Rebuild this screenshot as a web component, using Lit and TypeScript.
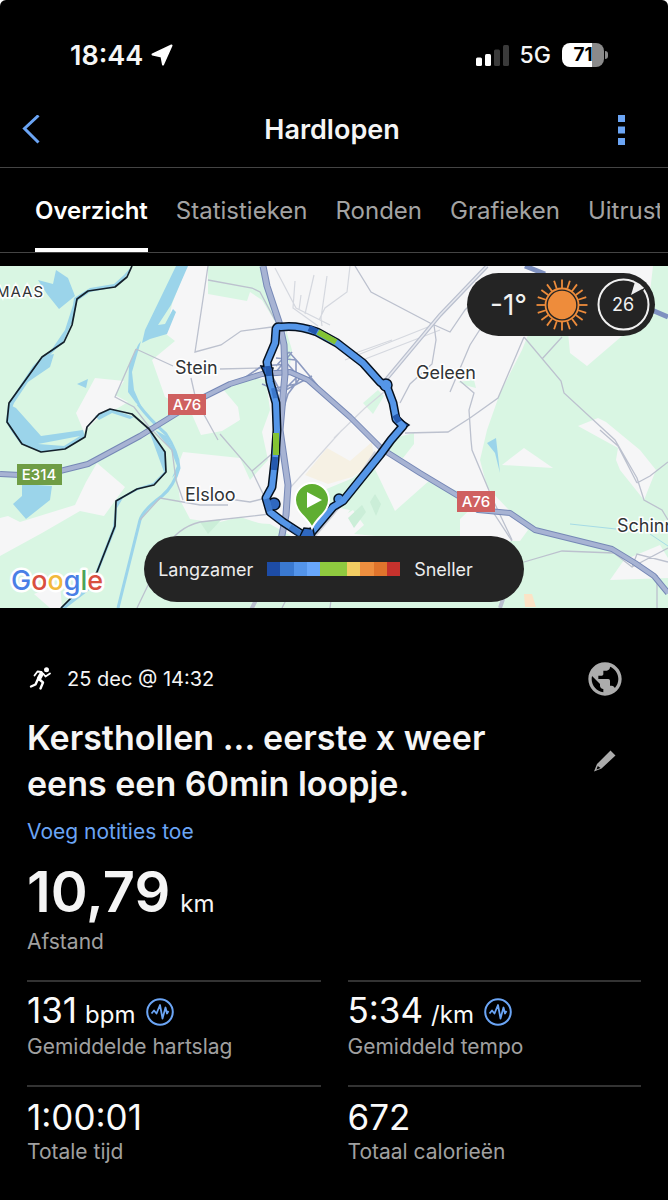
import { LitElement, html, svg, css } from "lit";
import { customElement, property, state } from "lit/decorators.js";

const PACE_COLORS = [
  "#1d4ca6", "#3a79d0", "#5394ea", "#68a7fb", "#8fca3f",
  "#8fca3f", "#f2cd62", "#ee8f3f", "#e0742c", "#c6322d",
];

@customElement("activity-map")
class ActivityMap extends LitElement {
  static styles = css`
    :host { display: block; position: relative; overflow: hidden; background: #d9f6e3; }
    .canvas { display: block; width: 100%; height: auto; }
    .canvas text { font-family: Inter, "Liberation Sans", sans-serif; }
    .green { fill: #d9f6e3; }
    .land { fill: #f6f6f7; }
    .sand { fill: #f6f1e4; }
    .water { fill: #9bd4ea; }
    .stream { fill: none; stroke: #9bd4ea; stroke-width: 3; }
    .minor { fill: none; stroke: #bcc1ce; stroke-width: 1.3; }
    .rail { fill: none; stroke: #d5d8df; stroke-width: 1.2; }
    .road-edge { fill: none; stroke: #7688b6; stroke-linejoin: round; }
    .road { fill: none; stroke: #a7b3d3; stroke-linejoin: round; }
    .ramp { fill: none; stroke: #8c9ac0; stroke-width: 1.6; stroke-linejoin: round; }
    .border { fill: none; stroke: #14202a; stroke-width: 1.7; stroke-linejoin: round; }
    .track-edge { fill: none; stroke: #06111f; stroke-width: 9; stroke-linejoin: round; }
    .track { fill: none; stroke: #5596e8; stroke-width: 6; stroke-linejoin: round; }
    .slow { stroke: #2459ae; }
    .fast { stroke: #83c334; }
    .town { font-size: 18px; fill: #303336; stroke: #fff; stroke-width: 3; paint-order: stroke; }
    .region { font-size: 15px; letter-spacing: 1px; fill: #303336; stroke: #fff; stroke-width: 3; paint-order: stroke; }
    .shield { font-size: 15px; font-weight: 500; fill: #fff; text-anchor: middle; }
    .brand { font-size: 27px; font-weight: 500; stroke: #fff; stroke-width: 5; stroke-linejoin: round; paint-order: stroke; }
    .b { fill: #4a7fe6; } .r { fill: #d9503f; } .y { fill: #f2b93b; } .g { fill: #4ba45a; }
    .weather {
      position: absolute; top: 7px; right: 13px; display: flex; align-items: center;
      height: 63px; padding: 0 5px 0 23px; border-radius: 32px; background: #242424; color: #f1f1f1;
    }
    .temp { font-size: 28px; width: 46px; }
    .sun { display: block; width: 52px; height: 52px; }
    .wind { display: block; width: 53px; height: 53px; margin-left: 9px; }
    .wind text { font-family: Inter, sans-serif; font-size: 18px; fill: #f1f1f1; text-anchor: middle; }
    .legend-row { position: absolute; left: 0; right: 0; bottom: 6px; display: flex; justify-content: center; }
    .legend {
      display: flex; align-items: center; justify-content: center; gap: 14px; box-sizing: border-box;
      width: 380px; height: 66px; padding-right: 37px; border-radius: 33px; background: #242424;
      color: #ededed; font-size: 18px;
    }
    .scale { display: flex; width: 133px; height: 14px; }
    .step { flex: 1; }
  `;

  private rays() {
    return Array.from({ length: 20 }, (_, i) => {
      const a = (i * Math.PI) / 10;
      const x = Math.cos(a), y = Math.sin(a);
      return svg`<line x1=${26 + 17 * x} y1=${26 + 17 * y} x2=${26 + 25.5 * x} y2=${26 + 25.5 * y}></line>`;
    });
  }

  private highway(d: string, width: number) {
    return svg`
      <path class="road-edge" stroke-width=${width} d=${d}></path>
      <path class="road" stroke-width=${width - 2} d=${d}></path>`;
  }

  private terrain() {
    return svg`
      <rect class="green" x="0" y="266" width="668" height="342"></rect>
      <path class="land" d="M187 266L172 304L166 334L175 341L152 360L165 397L190 410L201 435L222 431L240 420L262 432L268 460L250 480L240 458L183 452L176 470L180 500L190 519L216 523L240 517L268 526L300 541L440 541L470 541L520 541L528 530L487 487L480 460L487 430L500 393L522 350L530 330L568 332L570 353L587 366L622 336L648 310L653 266Z"></path>
      <path class="green" d="M208 266L262 266L272 300L277 325L262 300L250 292L247 301L208 294Z"></path>
      <path class="green" d="M222 388L246 376L266 380L270 410L262 432L246 438L240 452L220 452L214 440L240 420L238 407Z"></path>
      <path class="green" d="M220 436L244 432L246 446L232 456L220 455Z"></path>
      <path class="green" d="M286 330L292 350L290 365L284 350Z"></path>
      <path class="green" d="M363 403L378 390L384 396L373 414Z"></path>
      <path class="green" d="M394 438L414 433L414 444L403 458L388 452Z"></path>
      <path class="green" d="M300 500L353 478L372 463L395 511L430 480L460 492L480 500L460 519L460 541L330 541L350 510Z"></path>
      <path class="sand" d="M305 475L327 448L350 461L372 442L374 462L352 477L328 484Z"></path>
      <path class="green" d="M240 522L270 524L300 541L235 541Z"></path>
      <path class="land" d="M340 518L353 510L364 525L354 534L430 541L322 541Z"></path>
      <path class="land" d="M95 378L124 381L115 395L128 402L118 408L98 418L84 432L76 413Z"></path>
      <path class="land" d="M97 463L125 487L104 516L80 511L42 533L0 556V518L8 516L20 522L75 505L86 482Z"></path>
      <path class="land" d="M34 594L60 584L62 608L50 608Z"></path>
      <path class="land" d="M502 465L524 448L553 468Z"></path>
      <path class="land" d="M578 426L598 418L606 422L640 450L656 470L644 500L620 470L616 460L618 448Z"></path>
      <path class="land" d="M610 580L624 560L660 545L668 558V578Z"></path>
      <path class="land" d="M483 266L490 266L510 275L500 275Z"></path>
      <path class="green" d="M458 382L474 380L476 388L468 386Z"></path>
      <path d="M524 594L532 594L536 607L525 607Z" fill="#fbe3c6"></path>
      <path fill="#cbeed8" d="M348 518L362 505L366 512L354 528ZM370 502L375 494L381 504L376 516Z"></path>
      <path fill="#cbeed8" d="M200 522L222 519L208 534Z"></path>`;
  }

  private waters() {
    return svg`
      <path class="water" d="M176 266L188 266L171 305L158 325L165 324L173 309L176 312L167 334L150 339L142 343L145 330Z"></path>
      <path class="water" d="M141 341L132 372L134 390L142 408L136 403L128 392L129 365L138 345Z"></path>
      <path class="stream" d="M138 404Q150 420 166 434Q178 452 179 468Q174 486 162 496Q143 510 140 520L118 608"></path>
      <path class="water" d="M155 430L166 436L177 456L179 470L172 478L177 466L171 450Z"></path>
      <path class="water" d="M38 280L53 284L56 270L68 278L75 296L59 309L47 294Z"></path>
      <path class="water" d="M132 266L126 276L116 287L90 292L77 301L74 318L63 342L48 357L42 359L50 352L65 330L73 305L74 298L90 288L114 284L124 275Z"></path>
      <path class="water" d="M54 354L50 367L28 382L14 403L9 415L8 404L33 366L43 356Z"></path>
      <path class="water" d="M8 404L16 408L41 436L83 430L85 437L66 449L42 452L20 443L12 432L6 422Z"></path>
      <path fill="#d9f6e3" d="M38 444L80 436L64 446Z"></path>
      <path class="water" d="M77 384L88 379L86 388Z"></path>
      <path class="water" d="M95 416L111 409L134 417L130 419L112 413L99 420Z"></path>
      <path class="water" d="M148 428L157 440L166 452V472L155 484L138 490L123 498L117 508L116 528L98 573L96 571L113 527L116 500L137 488L153 483L164 472Z"></path>
      <path class="water" d="M22 484L52 486L50 500L26 519L13 504L22 496Z"></path>
      <path class="water" d="M98 572L96 585L66 608L60 608L80 590Z"></path>
      <path class="water" d="M487 443L496 438L500 473L495 453Z"></path>
      <path fill="none" stroke="#a6dbe6" stroke-width="1" d="M570 524L616 529M650 534L668 546"></path>`;
  }

  private roads() {
    return svg`
      <path class="rail" d="M275 268L296 308L330 325M295 281L293 308L318 326M301 295L299 310M314 275L305 314M327 276L321 318L322 326M350 266L347 292L325 308L319 320M345 360L428 327M350 355L392 340M360 361L440 330M334 438L365 408L384 392M290 488L342 430"></path>
      <path class="minor" d="M208 266L195 352L221 345L241 331L272 327M208 280L252 288L260 292L275 320M136 349L173 366M136 349L115 397L134 407L150 428L172 450L176 480L183 500M191 378L196 400L218 440M220 369L266 368M355 266L371 292L430 323L450 332L465 310L480 295M434 325L436 340L432 364L410 384L400 403M450 392L470 345L486 320L495 305M460 381L474 393L469 410L471 440L472 450L493 500L512 540M524 337L498 398L470 418L448 432L405 433M524 337L561 381L564 393L615 440L637 478L644 500L662 510L668 520M562 337L542 359M637 483L650 476L668 462M600 430L618 446L637 483M220 434L252 471L266 500M252 471L274 452M222 498L250 502L266 498M140 520L160 498L200 505L228 505M137 608L165 550Q176 528 200 522L270 514M524 562L562 551L614 553L632 567L637 554L668 562M632 567L668 548M657 575V608M333 584L330 608M290 592L282 608"></path>
      <path class="minor" stroke-width="2.4" d="M512 541L493 512"></path>
      <path fill="none" stroke="#bac0cf" stroke-width="4" d="M487 266L440 315L384 382M250 612L260 592M500 608L506 590"></path>
      <path fill="none" stroke="#e7e9ef" stroke-width="1.5" d="M487 266L440 315L384 382"></path>
      <path fill="none" stroke="#cdd0da" stroke-width="4" d="M376 452L344 500L314 536"></path>
      <path class="ramp" d="M240 381L262 366L288 364M262 384L282 392L312 376M276 358L296 360L296 384L276 388M289 352L298 362L318 386M289 352L276 366M284 360L300 378L288 394L280 420M272 376L284 398L282 420M292 352L276 372M284 390L300 374"></path>
      ${this.highway("M0 474L20 475L60 471L88 464L140 436L200 399L230 384L262 374L290 372L308 380L350 417L382 449L420 473L465 500L478 510L510 513L535 530L612 549L635 563L654 576L668 593", 6)}
      ${this.highway("M263 266L267 286L279 322L284 345L285 374L280 430L288 485L286 515L281 540", 7)}
      <path fill="none" stroke="#7f91c0" stroke-width="5" d="M525 266L545 274M640 305L668 317"></path>
      <path class="border" d="M132 266L127 277L115 287L88 291L77 299L72 325L64 342L42 357L9 403L7 422L22 444L41 452L65 449L85 437L87 427L99 414L110 409L132 414L149 429L165 452L166 472L154 485L137 489L116 501L115 526L97 572L61 608"></path>`;
  }

  private track() {
    const loop = "M303 535L283 522L270 512L266 498L272 487L275 460L277 430L276 403L270 382L267 362L275 343L276 329Q277 326 281 327Q298 325 317 332L337 343L363 363L380 382L387 387L393 403L396 419L403 426L391 440L380 455L343 501L333 507L311 533Z";
    return svg`
      <path class="track-edge" d=${loop}></path>
      <path d="M261 366L273 368L271 375L265 375ZM397 417L409 425L399 432Z" fill="#2459ae" stroke="#06111f" stroke-width="1.5"></path>
      <circle cx="386" cy="385" r="6" fill="#5596e8" stroke="#06111f" stroke-width="1.5"></circle>
      <circle cx="339" cy="499" r="5" fill="#4c8de0" stroke="#06111f" stroke-width="1.5"></circle>
      <circle cx="274" cy="504" r="6" fill="#2f68c0" stroke="#06111f" stroke-width="1.5"></circle>
      <path class="track" d=${loop}></path>
      <path class="track slow" d="M309 328L317 332M274 470L275 457M268 366L269 376M395 415L399 422"></path>
      <path class="track" stroke-opacity="0.5" style="stroke:#2459ae" d="M274 388L276 398M290 527L300 534M266 499L270 511"></path>
      <path class="track fast" d="M318 332L336 342M276 455L276 433"></path>
      <path d="M299 538L304 528L313 529L315 538Z" fill="#2f68c0" stroke="#06111f" stroke-width="1.5"></path>
      <path fill="#5fae31" stroke="#fff" stroke-width="2" d="M312 528C307 517 295 512 295 500A17 17 0 0 1 329 500C329 512 317 517 312 528Z"></path>
      <path fill="#fff" d="M307 492L322 500L307 508Z"></path>`;
  }

  render() {
    return html`
      <svg class="canvas" viewBox="0 266 668 342" role="img" aria-label="Kaart van de route">
        ${this.terrain()} ${this.waters()} ${this.roads()}
        <rect x="168" y="394" width="38" height="21" fill="#cf6060"></rect>
        <text class="shield" x="187" y="410">A76</text>
        <rect x="457" y="491" width="38" height="21" fill="#cf6060"></rect>
        <text class="shield" x="476" y="507">A76</text>
        <rect x="17" y="464" width="45" height="21" fill="#6f9d45"></rect>
        <text class="shield" x="39" y="480">E314</text>
        <text class="region" x="-4" y="297">MAAS</text>
        <text class="town" x="175" y="374">Stein</text>
        <text class="town" x="416" y="379">Geleen</text>
        <text class="town" x="185" y="501">Elsloo</text>
        <text class="town" x="617" y="532">Schinnen</text>
        ${this.track()}
        <text class="brand" x="11" y="590"><tspan class="b">G</tspan><tspan class="r">o</tspan><tspan class="y">o</tspan><tspan class="b">g</tspan><tspan class="g">l</tspan><tspan class="r">e</tspan></text>
      </svg>
      <div class="weather">
        <span class="temp">-1°</span>
        <svg class="sun" viewBox="0 0 52 52" aria-label="Zonnig">
          <g stroke="#ee8c3b" stroke-width="1.8">${this.rays()}</g>
          <circle cx="26" cy="26" r="16.5" fill="#242424" stroke="#ee8c3b" stroke-width="1.8"></circle>
          <circle cx="26" cy="26" r="14.2" fill="#ee8c3b"></circle>
        </svg>
        <svg class="wind" viewBox="0 0 53 53">
          <circle cx="26.500" cy="26.500" r="25" fill="none" stroke="#f1f1f1" stroke-width="2"></circle>
          <path fill="#242424" d="M38 0L50 7L46 13L35 6Z"></path>
          <path fill="#f1f1f1" d="M38 4L34 17L47 10Z"></path>
          <path fill="none" stroke="#f1f1f1" stroke-width="2" d="M36 3.400A25 25 0 0 1 46 10.500"></path>
          <text x="26" y="33">26</text>
        </svg>
      </div>
      <div class="legend-row">
        <div class="legend">
          <span>Langzamer</span>
          <span class="scale">
            ${PACE_COLORS.map((c) => html`<span class="step" style="background:${c}"></span>`)}
          </span>
          <span>Sneller</span>
        </div>
      </div>`;
  }
}

@customElement("stat-cell")
class StatCell extends LitElement {
  @property() value = "";
  @property() unit = "";
  @property() label = "";
  @property({ type: Boolean }) chart = false;

  static styles = css`
    :host { display: block; box-sizing: border-box; height: 105px; border-top: 2px solid #333; padding-top: 8px; }
    .line { display: flex; align-items: center; height: 44px; }
    .value { display: flex; align-items: baseline; gap: 8px; font-size: 35px; line-height: 44px; color: #fafafa; }
    .unit { font-size: 24px; }
    .label { font-size: 21px; line-height: 26px; color: #a0a0a0; }
    .chart { display: block; margin: 0 0 0 10px; padding: 0; border: 0; background: none; }
    .pulse { display: block; width: 28px; height: 28px; }
  `;

  render() {
    return html`
      <div class="line">
        <span class="value"><span>${this.value}</span>${this.unit ? html`<span class="unit">${this.unit}</span>` : ""}</span>
        ${this.chart
          ? html`<button class="chart" aria-label="Grafiek tonen">
              <svg class="pulse" viewBox="0 0 28 28" fill="none" stroke="#6ba5f5" stroke-width="2">
                <circle cx="14" cy="14" r="12.800"></circle>
                <path stroke-width="1.800" stroke-linejoin="round" d="M5.500 15.500L8 12.500L10.500 15.500L14 7L16.500 20.500L19.500 9.500L21 15.500L22.500 13"></path>
              </svg>
            </button>`
          : ""}
      </div>
      <div class="label">${this.label}</div>`;
  }
}

@customElement("app-root")
class AppRoot extends LitElement {
  @state() private active = "Overzicht";

  static styles = css`
    :host {
      display: block; min-height: 100vh; border-radius: 6px 6px 0 0; overflow: hidden;
      background: #000; color: #f5f5f5; font-family: Inter, "Liberation Sans", sans-serif;
    }
    button { font: inherit; color: inherit; border: 0; padding: 0; background: none; cursor: pointer; }
    svg { display: block; }
    .status {
      display: flex; align-items: center; justify-content: space-between;
      height: 92px; padding: 18px 60px 0 70px; box-sizing: border-box;
    }
    .clock { display: flex; align-items: center; gap: 8px; font-size: 27px; font-weight: 600; }
    .arrow { width: 22px; height: 22px; }
    .signals { display: flex; align-items: center; font-size: 23px; font-weight: 500; }
    .bars { width: 33px; height: 21px; margin-right: 11px; }
    .battery { display: flex; align-items: center; gap: 1px; margin-left: 11px; }
    .level {
      width: 42px; height: 24px; border-radius: 8px; color: #000; text-align: center;
      font-size: 19px; line-height: 24px; font-weight: 700;
      background: linear-gradient(90deg, #fff 71%, #8a8a8a 71%);
    }
    .cap { width: 3px; height: 8px; border-radius: 0 4px 4px 0; background: #8a8a8a; }
    .bar {
      display: grid; grid-template-columns: 40px 1fr 40px; align-items: center;
      height: 76px; padding: 0 26px 0 22px; box-sizing: border-box; border-bottom: 1px solid #444;
    }
    .back-icon { width: 20px; height: 30px; }
    .title { margin: 0; text-align: center; font-size: 27px; line-height: 32px; font-weight: 600; }
    .more { justify-self: end; padding-right: 16px; }
    .more-icon { width: 8px; height: 30px; }
    .tabs { display: flex; border-bottom: 1px solid #444; height: 84px; }
    .scroller { display: flex; gap: 28px; flex: 1; min-width: 0; overflow: hidden; margin-right: 8px; padding-left: 35px; }
    .tab {
      flex: none; padding-top: 5px; font-size: 24px; color: #a3a3a3; border-bottom: 4px solid transparent; white-space: nowrap;
    }
    .tab.on { color: #fff; font-weight: 600; border-bottom-color: #fff; }
    .map { margin-top: 13px; }
    .summary { display: grid; grid-template-columns: 1fr 34px; padding: 51px 46px 0 27px; }
    .when { display: flex; align-items: center; gap: 14px; height: 40px; font-size: 20px; }
    .runner { width: 26px; height: 26px; }
    .side { display: flex; flex-direction: column; align-items: center; gap: 50px; }
    .globe { width: 40px; height: 40px; }
    .pencil { width: 24px; height: 24px; }
    .name { margin: 16px 0 0; font-size: 34px; line-height: 46px; font-weight: 600; }
    .notes { display: inline-block; margin-top: 12px; font-size: 21px; line-height: 26px; color: #6ba5f5; text-decoration: none; }
    .total { padding: 22px 27px 0; }
    .distance { display: flex; align-items: baseline; gap: 10px; font-size: 56px; line-height: 50px; font-weight: 600; }
    .unit { font-size: 24px; font-weight: 400; }
    .caption { font-size: 21px; line-height: 26px; color: #a0a0a0; }
    .stats { display: grid; grid-template-columns: 1fr 1fr; column-gap: 27px; padding: 25px 27px 0; }
  `;

  render() {
    const tabs = ["Overzicht", "Statistieken", "Ronden", "Grafieken", "Uitrusting"];
    return html`
      <div class="status">
        <div class="clock">
          <span>18:44</span>
          <svg class="arrow" viewBox="0 0 22 22"><path fill="#fff" stroke="#fff" stroke-width="2" stroke-linejoin="round" d="M20.500 1.500L12 20.500L10.500 12.500L1.500 10.500Z"></path></svg>
        </div>
        <div class="signals">
          <svg class="bars" viewBox="0 0 33 21">
            <rect x="0" y="12.500" width="6" height="8.500" rx="1.500" fill="#fff"></rect>
            <rect x="9" y="9" width="6" height="12" rx="1.500" fill="#fff"></rect>
            <rect x="18" y="4.500" width="6" height="16.500" rx="1.500" fill="#3a3a3a"></rect>
            <rect x="27" y="0" width="6" height="21" rx="1.500" fill="#3a3a3a"></rect>
          </svg>
          <span>5G</span>
          <span class="battery"><span class="level">71</span><span class="cap"></span></span>
        </div>
      </div>
      <header class="bar">
        <button class="back" aria-label="Terug">
          <svg class="back-icon" viewBox="0 0 20 30"><path fill="none" stroke="#6ba5f5" stroke-width="3" d="M16.500 0.500L2.500 13.500L16.500 27.500"></path></svg>
        </button>
        <h1 class="title">Hardlopen</h1>
        <button class="more" aria-label="Meer opties">
          <svg class="more-icon" viewBox="0 0 8 30" fill="#6ba5f5"><path d="M0 0h7v7H0zM0 11.500h7v7H0zM0 23h7v7H0z"></path></svg>
        </button>
      </header>
      <nav class="tabs">
        <div class="scroller" role="tablist">
          ${tabs.map((t) => html`<button class="tab ${t === this.active ? "on" : ""}" role="tab"
            aria-selected=${t === this.active} @click=${() => (this.active = t)}>${t}</button>`)}
        </div>
      </nav>
      <activity-map class="map"></activity-map>
      <section class="summary">
        <div>
          <div class="when">
            <svg class="runner" viewBox="0 0 26 26" fill="none" stroke="#fff" stroke-linecap="round" stroke-linejoin="round">
              <circle cx="19.500" cy="3.800" r="2.500" fill="#fff" stroke="none"></circle>
              <path stroke-width="4.500" d="M14.500 8L12 12.500"></path>
              <path stroke-width="1.800" d="M14.500 6L10.500 5.500L7.500 9.500M16.500 8L18.500 10.500L23 7.500"></path>
              <path stroke-width="2.400" d="M12.500 13.500L16 16.500L13.500 22.500M10.500 14L8.500 18.500L4 20.500"></path>
            </svg>
            <span>25 dec @ 14:32</span>
          </div>
          <h2 class="name">Kersthollen ... eerste x weer<br />eens een 60min loopje.</h2>
          <a class="notes" href="#notities">Voeg notities toe</a>
        </div>
        <div class="side">
          <button aria-label="Privacy">
            <svg class="globe" viewBox="0 0 24 24" fill="#acacac"><path d="M12 2C6.480 2 2 6.480 2 12s4.480 10 10 10 10-4.480 10-10S17.520 2 12 2zm-1 17.930c-3.950-.49-7-3.850-7-7.930 0-.62.08-1.210.21-1.790L9 15v1c0 1.100.9 2 2 2v1.930zm6.900-2.540c-.26-.81-1-1.390-1.900-1.390h-1v-3c0-.55-.45-1-1-1H8v-2h2c.55 0 1-.45 1-1V7h2c1.100 0 2-.9 2-2v-.41c2.930 1.190 5 4.060 5 7.410 0 2.080-.8 3.970-2.100 5.390z"></path></svg>
          </button>
          <button aria-label="Naam bewerken">
            <svg class="pencil" viewBox="0 0 24 24" fill="#acacac" fill-rule="evenodd"><path d="M17.500 1.500L22.500 6.500L8.500 19.500L1 22.500L4 15ZM4.800 17L3.500 20.500L7.500 19Z"></path></svg>
          </button>
        </div>
      </section>
      <section class="total">
        <div class="distance"><span>10,79</span><span class="unit">km</span></div>
        <div class="caption">Afstand</div>
      </section>
      <section class="stats">
        <stat-cell value="131" unit="bpm" label="Gemiddelde hartslag" chart></stat-cell>
        <stat-cell value="5:34" unit="/km" label="Gemiddeld tempo" chart></stat-cell>
        <stat-cell value="1:00:01" label="Totale tijd"></stat-cell>
        <stat-cell value="672" label="Totaal calorieën"></stat-cell>
      </section>`;
  }
}
